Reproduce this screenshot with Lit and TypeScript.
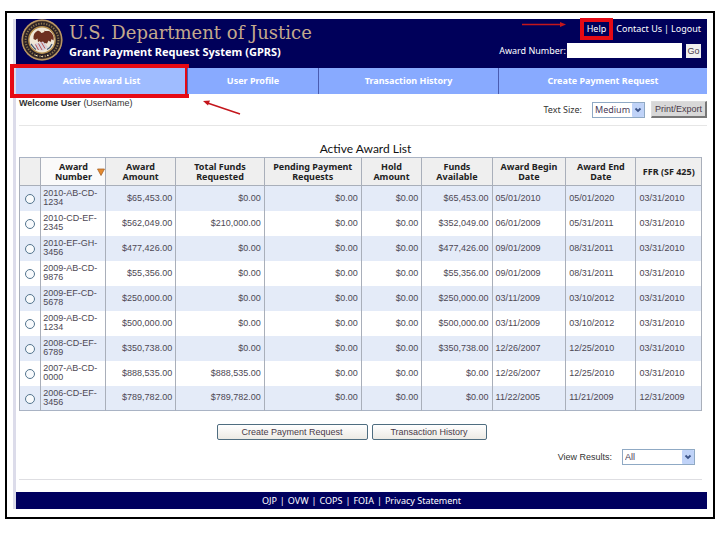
import { LitElement, html, svg, css } from 'lit';
import { customElement, property, state } from 'lit/decorators.js';

interface Award {
  number: string;
  amount: string;
  requested: string;
  available: string;
  begin: string;
  end: string;
  ffr: string;
}

const AWARDS: Award[] = [
  { number: '2010-AB-CD-1234', amount: '$65,453.00', requested: '$0.00', available: '$65,453.00', begin: '05/01/2010', end: '05/01/2020', ffr: '03/31/2010' },
  { number: '2010-CD-EF-2345', amount: '$562,049.00', requested: '$210,000.00', available: '$352,049.00', begin: '06/01/2009', end: '05/31/2011', ffr: '03/31/2010' },
  { number: '2010-EF-GH-3456', amount: '$477,426.00', requested: '$0.00', available: '$477,426.00', begin: '09/01/2009', end: '08/31/2011', ffr: '03/31/2010' },
  { number: '2009-AB-CD-9876', amount: '$55,356.00', requested: '$0.00', available: '$55,356.00', begin: '09/01/2009', end: '08/31/2011', ffr: '03/31/2010' },
  { number: '2009-EF-CD-5678', amount: '$250,000.00', requested: '$0.00', available: '$250,000.00', begin: '03/11/2009', end: '03/10/2012', ffr: '03/31/2010' },
  { number: '2009-AB-CD-1234', amount: '$500,000.00', requested: '$0.00', available: '$500,000.00', begin: '03/11/2009', end: '03/10/2012', ffr: '03/31/2010' },
  { number: '2008-CD-EF-6789', amount: '$350,738.00', requested: '$0.00', available: '$350,738.00', begin: '12/26/2007', end: '12/25/2010', ffr: '03/31/2010' },
  { number: '2007-AB-CD-0000', amount: '$888,535.00', requested: '$888,535.00', available: '$0.00', begin: '12/26/2007', end: '12/25/2010', ffr: '03/31/2010' },
  { number: '2006-CD-EF-3456', amount: '$789,782.00', requested: '$789,782.00', available: '$0.00', begin: '11/22/2005', end: '11/21/2009', ffr: '12/31/2009' },
];

@customElement('doj-seal')
class DojSeal extends LitElement {
  static styles = css`
    :host {
      display: block;
      flex: none;
    }
    svg {
      display: block;
    }
  `;

  render() {
    return html`
      <svg width="42" height="42" viewBox="0 0 42 42" aria-hidden="true">
        <circle cx="21" cy="21" r="20.5" fill="#8a6a3c" />
        <circle cx="21" cy="21" r="19.8" fill="none" stroke="#b9976a" stroke-width="1.2" />
        <circle cx="21" cy="21" r="18.8" fill="#2a2026" />
        <circle cx="21" cy="21" r="16.4" fill="none" stroke="#8a744c" stroke-width="2" stroke-dasharray="1.3 1.4" />
        <circle cx="21" cy="21" r="13.2" fill="#efe6d6" stroke="#b08a4a" stroke-width="1.4" />
        <path d="M12.5 20c-.5-4 1-7 4.500-8.500l3 1.500 1.500-2 2.500 1 4 0c3.500 2 5.500 5.500 4.500 9.500l-2-1.500-1 3-2-1.500-1.500 3-2-.5-1 2.500-3-.5-1-4-2 1-.5-3.500-2 1.500z" fill="#6d2f20" />
        <path d="M19.500 12l2.500-1.500 1.800 1.400-1.500 1.700-2.300.4z" fill="#f3e9d4" />
        <path d="M13 25l9-2.500 5 5.500-5 4-6-1.500z" fill="#d7d2dc" />
        <path d="M14.500 25.500l3 5.500M17.500 24.500l3.500 6.500M20.500 23.500l3.500 6" stroke="#b85252" stroke-width="1" />
        <path d="M10 25c1.500 1.500 2.500 4 5 5.500M31 25c-1 2.500-3 4.500-5 5.500" stroke="#3f5573" stroke-width="1.2" fill="none" />
        <path d="M14.500 36.500h1.500M20.200 37.500h1.600M26 36.500h1.500" stroke="#ece0c0" stroke-width="1.2" />
      </svg>
    `;
  }
}

@customElement('select-field')
class SelectField extends LitElement {
  static styles = css`
    :host {
      display: block;
    }
    label {
      display: flex;
      align-items: center;
      gap: 10px;
    }
    .box {
      position: relative;
      display: flex;
    }
    select {
      appearance: none;
      height: 16px;
      padding: 0 12px 0 2px;
      border: 1px solid #8fa9c4;
      border-radius: 0;
      background: #fff;
      color: #4a3a55;
      font: inherit;
    }
    .medium {
      width: 53px;
    }
    .wide {
      width: 73px;
    }
    .arrow {
      position: absolute;
      top: 1px;
      right: 1px;
      pointer-events: none;
    }
  `;

  @property() label = '';
  @property() size = 'medium';
  @property({ type: Array }) options: string[] = [];

  render() {
    return html`
      <label>
        ${this.label}
        <span class="box">
          <select class="${this.size}">
            ${this.options.map((option) => html`<option>${option}</option>`)}
          </select>
          <svg class="arrow" width="12" height="14" viewBox="0 0 12 14">
            <rect width="12" height="14" rx="1" fill="#c0d3f8" />
            <path d="M3.500 5.500l2.500 2.500 2.500-2.500" fill="none" stroke="#3c5488" stroke-width="1.800" />
          </svg>
        </span>
      </label>
    `;
  }
}

@customElement('award-table')
class AwardTable extends LitElement {
  static styles = css`
    :host {
      display: block;
    }
    table {
      width: 100%;
      table-layout: fixed;
      border-collapse: collapse;
      border: 1px solid #a9b3c4;
      font: 9px/9px 'Liberation Sans', Arial, sans-serif;
      color: #4d4854;
    }
    caption {
      padding: 0 0 1px 10px;
      font: 12px/15px Lato, sans-serif;
      color: #111;
    }
    th,
    td {
      box-sizing: border-box;
      height: 25px;
      padding: 0 3px;
      border-left: 1px solid #a9afba;
      border-right: 1px solid #a9afba;
    }
    th {
      height: 28px;
      padding: 0;
      border-bottom: 1px solid #a9afba;
      background: #efefef;
      color: #222;
      font: bold 9px/10px 'Noto Sans', sans-serif;
    }
    tbody tr:nth-child(odd) {
      background: #e4ebf8;
    }
    .pick-col {
      width: 3.1%;
    }
    .number-col {
      width: 9.5%;
    }
    .amount-col {
      width: 10.3%;
    }
    .requested-col {
      width: 13%;
    }
    .pending-col {
      width: 14.2%;
    }
    .hold-col {
      width: 8.9%;
    }
    .begin-col {
      width: 10.8%;
    }
    .sorted {
      background: #fafafa;
    }
    .sort {
      display: flex;
      align-items: center;
      justify-content: flex-end;
      gap: 5px;
    }
    .money {
      text-align: right;
    }
    .number {
      padding: 0 2px;
    }
    input {
      appearance: none;
      display: block;
      box-sizing: border-box;
      width: 10px;
      height: 10px;
      margin: 2px auto 0;
      border: 1px solid #54758e;
      border-radius: 50%;
      background: #f8fafc;
    }
    input:checked {
      background: #54758e;
    }
  `;

  @property({ type: Array }) awards: Award[] = [];

  renderRow(award: Award) {
    const split = award.number.lastIndexOf('-') + 1;
    return html`
      <tr>
        <td>
          <input type="radio" name="award" aria-label="${award.number}" />
        </td>
        <td class="number">${award.number.slice(0, split)}<br />${award.number.slice(split)}</td>
        <td class="money">${award.amount}</td>
        <td class="money">${award.requested}</td>
        <td class="money">$0.00</td>
        <td class="money">$0.00</td>
        <td class="money">${award.available}</td>
        <td>${award.begin}</td>
        <td>${award.end}</td>
        <td>${award.ffr}</td>
      </tr>
    `;
  }

  render() {
    return html`
      <table>
        <caption>Active Award List</caption>
        <colgroup>
          <col class="pick-col" />
          <col class="number-col" />
          <col class="amount-col" />
          <col class="requested-col" />
          <col class="pending-col" />
          <col class="hold-col" />
          <col class="amount-col" />
          <col class="begin-col" />
          <col class="amount-col" />
          <col />
        </colgroup>
        <thead>
          <tr>
            <th></th>
            <th class="sorted">
              <span class="sort">
                <span>Award<br />Number</span>
                <svg width="8" height="8" viewBox="0 0 8 8">
                  <path d="M.5 1h7L4 7.500z" fill="#e58a2e" stroke="#a8662c" stroke-width=".8" />
                </svg>
              </span>
            </th>
            <th>Award<br />Amount</th>
            <th>Total Funds<br />Requested</th>
            <th>Pending Payment<br />Requests</th>
            <th>Hold<br />Amount</th>
            <th>Funds<br />Available</th>
            <th>Award Begin<br />Date</th>
            <th>Award End<br />Date</th>
            <th>FFR (SF 425)</th>
          </tr>
        </thead>
        <tbody>
          ${this.awards.map((award) => this.renderRow(award))}
        </tbody>
      </table>
    `;
  }
}

@customElement('app-root')
class AppRoot extends LitElement {
  static styles = css`
    :host {
      display: block;
      padding: 11px 5px 21px;
      background: #fff;
      font: 9px/12px 'Noto Sans', sans-serif;
      color: #333;
    }
    .frame {
      padding: 6px 6px 8px;
      border: 2px solid #000;
    }
    .page {
      border-left: 3px solid #dcdcea;
    }
    header {
      display: flex;
      justify-content: space-between;
      height: 49px;
      background: #00005a;
      color: #fff;
    }
    .brand {
      display: flex;
      gap: 6px;
      padding-left: 5px;
    }
    h1,
    .system {
      margin: 0;
    }
    h1 {
      padding-top: 3px;
      font: 18px/22px 'DejaVu Serif', serif;
      color: #c4a98c;
    }
    .system {
      font: bold 11px/16px 'Noto Sans', sans-serif;
    }
    .tools {
      position: relative;
      display: flex;
      flex-direction: column;
      align-items: flex-end;
      gap: 4px;
      padding-right: 6px;
    }
    .links {
      display: flex;
      align-items: center;
      gap: 2px;
      height: 20px;
    }
    a {
      color: inherit;
      text-decoration: none;
    }
    .help {
      position: relative;
      margin-right: 8px;
    }
    .help::after {
      content: '';
      position: absolute;
      inset: -5px -7px;
      border: 4px solid #e60a14;
    }
    .search {
      display: flex;
      align-items: center;
      gap: 4px;
    }
    .search label {
      display: flex;
      align-items: center;
      gap: 1px;
    }
    .search input {
      box-sizing: border-box;
      width: 115px;
      height: 15px;
      padding: 0 2px;
      border: 0;
      background: #fff;
      font: inherit;
    }
    button {
      padding: 0;
      font: 9px/12px 'Liberation Sans', Arial, sans-serif;
      color: #4a3a48;
    }
    .go {
      width: 15px;
      height: 14px;
      border: 0;
      background: #f0f0f0;
    }
    .help-arrow {
      position: absolute;
      top: 2px;
      right: 140px;
    }
    nav {
      display: grid;
      grid-template-columns: 171fr 131fr 180fr 209fr;
      height: 26px;
      font-weight: bold;
      line-height: 26px;
      text-align: center;
      color: #fff;
    }
    nav a {
      position: relative;
      background: #88aaff;
      border-left: 1px solid #4a5cb0;
    }
    nav a.active {
      border-left: 0;
      background: #9fbcff;
    }
    nav a.active::after {
      content: '';
      position: absolute;
      inset: -4px -2px -4px -6px;
      border: 4px solid #e60a14;
    }
    .bar {
      position: relative;
      display: flex;
      align-items: flex-start;
      justify-content: space-between;
      height: 31px;
      margin: 0 0 0 3px;
      border-bottom: 1px solid #e6e6e6;
    }
    .welcome {
      margin: 3px 0 0;
      font: 9px/12px 'Liberation Sans', Arial, sans-serif;
    }
    .view-options {
      display: flex;
      align-items: center;
      gap: 6px;
      padding-top: 7px;
    }
    .print {
      width: 56px;
      height: 17px;
      border: 1px solid #ddd;
      border-right: 2px solid #777;
      border-bottom: 2px solid #777;
      background: #d8d8d8;
    }
    .list-arrow {
      position: absolute;
      top: 5px;
      left: 183px;
    }
    main {
      display: block;
      padding: 15px 5px 0 3px;
    }
    .actions {
      display: flex;
      justify-content: center;
      gap: 4px;
      padding: 13px 18px 9px 0;
    }
    .actions button {
      height: 16px;
      border: 1px solid #4f6d80;
      border-radius: 2px;
      background: linear-gradient(#fff, #eceae4);
    }
    .create {
      width: 151px;
    }
    .history {
      width: 115px;
    }
    .results {
      display: flex;
      justify-content: flex-end;
      padding: 0 7px 14px 0;
      border-bottom: 1px solid #dedee2;
      font-family: 'Liberation Sans', Arial, sans-serif;
    }
    footer {
      display: flex;
      justify-content: center;
      gap: 3px;
      margin-top: 12px;
      background: #00005f;
      color: #fff;
      line-height: 17px;
    }
  `;

  @state() tabs = ['Active Award List', 'User Profile', 'Transaction History', 'Create Payment Request'];
  @state() footerLinks = ['OJP', 'OVW', 'COPS', 'FOIA', 'Privacy Statement'];

  renderArrow(line: string, head: string) {
    return svg`
      <path d="${line}" stroke="#c4161c" stroke-width="1.500" />
      <path d="${head}" fill="#c4161c" />
    `;
  }

  render() {
    return html`
      <div class="frame">
        <div class="page">
          <header>
            <div class="brand">
              <doj-seal></doj-seal>
              <div>
                <h1>U.S. Department of Justice</h1>
                <p class="system">Grant Payment Request System (GPRS)</p>
              </div>
            </div>
            <div class="tools">
              <div class="links">
                <a class="help" href="#">Help</a>
                <a href="#">Contact Us</a>
                <span>|</span>
                <a href="#">Logout</a>
              </div>
              <div class="search">
                <label>Award Number: <input type="text" /></label>
                <button class="go">Go</button>
              </div>
              <svg class="help-arrow" width="46" height="7" viewBox="0 0 46 7">
                ${this.renderArrow('M1 3.500h40', 'M39 1l6 2.500-6 2.500z')}
              </svg>
            </div>
          </header>
          <nav>
            ${this.tabs.map(
              (tab, i) => html`<a class="${i === 0 ? 'active' : ''}" href="#">${tab}</a>`
            )}
          </nav>
          <div class="bar">
            <p class="welcome"><b>Welcome User</b> (UserName)</p>
            <div class="view-options">
              <select-field label="Text Size:" .options="${['Medium', 'Small', 'Large']}"></select-field>
              <button class="print">Print/Export</button>
            </div>
            <svg class="list-arrow" width="40" height="17" viewBox="0 0 40 17">
              ${this.renderArrow('M4 3.500L38 15', 'M1 2l7-.5-2 5z')}
            </svg>
          </div>
          <main>
            <award-table .awards="${AWARDS}"></award-table>
            <div class="actions">
              <button class="create">Create Payment Request</button>
              <button class="history">Transaction History</button>
            </div>
            <div class="results">
              <select-field label="View Results:" size="wide" .options="${['All']}"></select-field>
            </div>
          </main>
          <footer>
            ${this.footerLinks.map(
              (link, i) => html`${i > 0 ? html`<span>|</span>` : ''}<a href="#">${link}</a>`
            )}
          </footer>
        </div>
      </div>
    `;
  }
}
